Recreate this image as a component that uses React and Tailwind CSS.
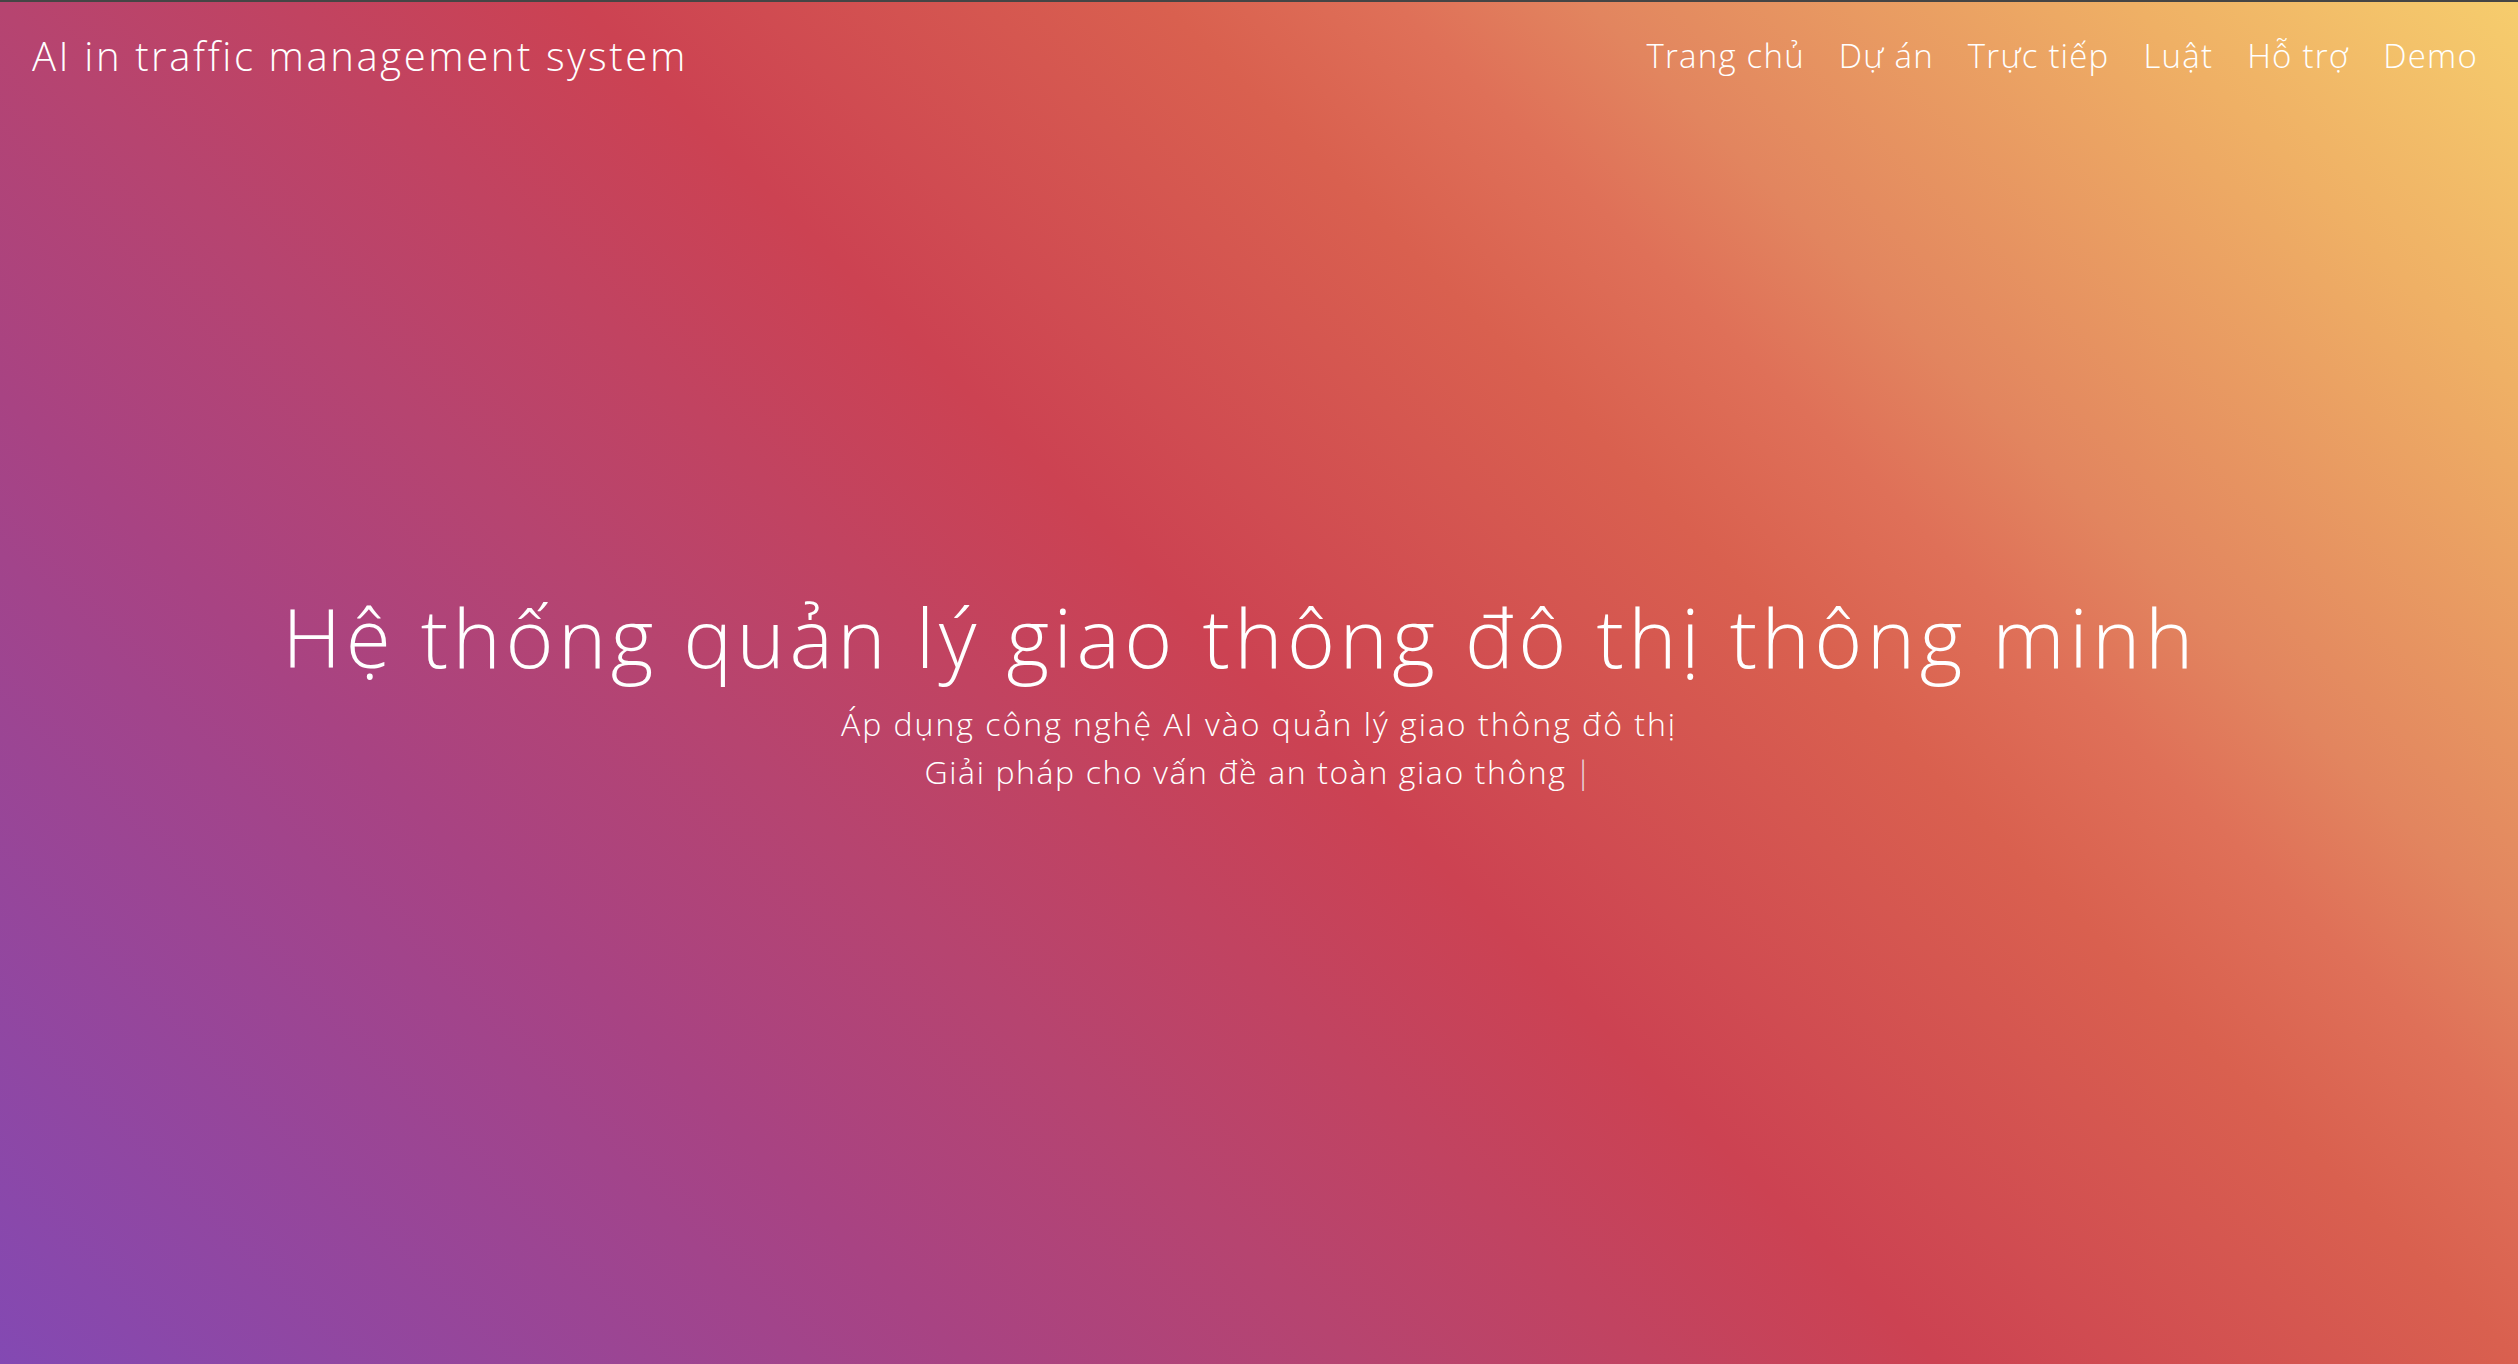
import React from 'react';

// Landing hero for the traffic management site
const navLinks = ['Trang chủ', 'Dự án', 'Trực tiếp', 'Luật', 'Hỗ trợ', 'Demo'];

const App = () => {
  return (
    <div
      className="flex flex-col w-full h-[1364px] border-t-2 border-[#454545] text-white overflow-hidden bg-[linear-gradient(45deg,#8349b3_0%,#a84383_25%,#b64470_35%,#cc4252_50%,#d9604f_65%,#df7058_71%,#e2855f_76%,#efb065_90%,#f6cd6d_100%)]"
      style={{ fontFamily: '"Open Sans", "Noto Sans", sans-serif' }}
    >
      {/* Top navigation */}
      <nav className="flex items-center justify-between h-[108px] pl-8 pr-10">
        <a className="text-[40px] font-light tracking-[2.6px]">AI in traffic management system</a>
        <ul className="flex items-center gap-[34px] text-[33px] font-light tracking-[1.2px]">
          {navLinks.map((link) => (
            <li key={link}>
              <a>{link}</a>
            </li>
          ))}
        </ul>
      </nav>

      {/* Hero */}
      <main className="flex flex-1 flex-col items-center justify-center pb-[90px]">
        <h1 className="pr-[38px] text-[82px] font-light leading-[96px] tracking-[4.4px]">
          Hệ thống quản lý giao thông đô thị thông minh
        </h1>
        <div className="mt-[16px] flex flex-col items-center text-[32px] font-light leading-[48px] tracking-[2px]">
          <p>Áp dụng công nghệ AI vào quản lý giao thông đô thị</p>
          <p className="tracking-[1.6px]">
            Giải pháp cho vấn đề an toàn giao thông<span className="ml-[8px] text-[#e8d6dc]">|</span>
          </p>
        </div>
      </main>
    </div>
  );
};

export default App;
